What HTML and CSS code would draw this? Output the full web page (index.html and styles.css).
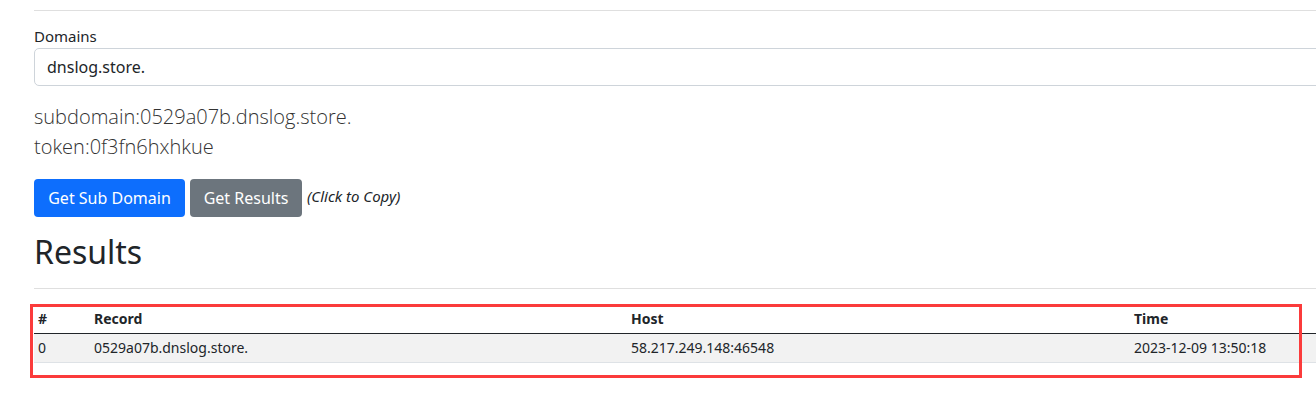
FILE: index.html
```html
<!DOCTYPE html>
<html lang="en">
<head>
<meta charset="utf-8">
<title>DNSLog</title>
<link rel="stylesheet" href="styles.css">
</head>
<body>
<main class="page">
  <hr class="rule top-rule">
  <div class="field">
    <label class="field-label" for="domain">Domains</label>
    <div class="input" id="domain">dnslog.store.</div>
  </div>
  <p class="lead">subdomain:0529a07b.dnslog.store.<br>token:0f3fn6hxhkue</p>
  <div class="actions">
    <button class="btn btn-primary">Get Sub Domain</button>
    <button class="btn btn-secondary">Get Results</button>
    <em class="hint">(Click to Copy)</em>
  </div>
  <h2 class="title">Results</h2>
  <hr class="rule">
  <div class="table-wrap">
    <table class="results">
      <thead>
        <tr><th class="c-id">#</th><th class="c-rec">Record</th><th class="c-host">Host</th><th class="c-time">Time</th></tr>
      </thead>
      <tbody>
        <tr><td>0</td><td>0529a07b.dnslog.store.</td><td>58.217.249.148:46548</td><td>2023-12-09 13:50:18</td></tr>
      </tbody>
    </table>
    <div class="highlight"></div>
  </div>
</main>
</body>
</html>
```
FILE: styles.css
```css
html {
  overflow: hidden;
}
html, body {
  margin: 0;
  padding: 0;
  background: #fff;
}
body {
  font-family: "Noto Sans", "Open Sans", sans-serif;
  color: #212529;
  font-size: 16px;
  line-height: 1.5;
}
.page {
  width: 1400px;
  padding: 10px 0 40px 34px;
}
.rule {
  border: 0;
  border-top: 1px solid #dfdfdf;
  margin: 0;
}
.top-rule {
  margin-bottom: 14px;
}
.field-label {
  display: block;
  font-size: 15px;
  line-height: 22px;
  margin-bottom: 1px;
}
.input {
  height: 38px;
  box-sizing: border-box;
  border: 1px solid #ced4da;
  border-radius: 5px;
  padding: 6px 12px;
  font-size: 16px;
  line-height: 24px;
}
.lead {
  font-family: "Open Sans", sans-serif;
  font-weight: 300;
  font-size: 20px;
  line-height: 30px;
  margin: 16px 0 17px;
  color: #333;
}
.actions {
  display: flex;
  align-items: center;
  gap: 5px;
}
.btn {
  font-family: inherit;
  font-size: 16px;
  line-height: 24px;
  padding: 6px 12px;
  border-radius: 4px;
  border: 1px solid transparent;
  color: #fff;
  height: 38px;
}
.btn-primary { background: #0d6efd; width: 151px; }
.btn-secondary { background: #6c757d; width: 112px; }
.hint {
  font-size: 15px;
  margin-top: -4px;
}
.title {
  font-size: 32px;
  font-weight: 400;
  line-height: 1.2;
  margin: 16px 0 17px;
}
.table-wrap {
  position: relative;
  margin-top: 16px;
}
.results {
  border-collapse: collapse;
  width: 1400px;
  table-layout: fixed;
  font-size: 14px;
  line-height: 20px;
}
.results th, .results td {
  text-align: left;
  padding: 4px 4px;
  vertical-align: top;
}
.results th { font-weight: 700; border-bottom: 1px solid #212529; }
.results td { background: #f2f2f2; border-bottom: 1px solid #dee2e6; }
.c-id { width: 48px; }
.c-rec { width: 529px; }
.c-host { width: 495px; }
.highlight {
  position: absolute;
  left: -4px;
  top: -1px;
  width: 1266px;
  height: 68px;
  border: 3px solid #fb3b3b;
  pointer-events: none;
}
```
